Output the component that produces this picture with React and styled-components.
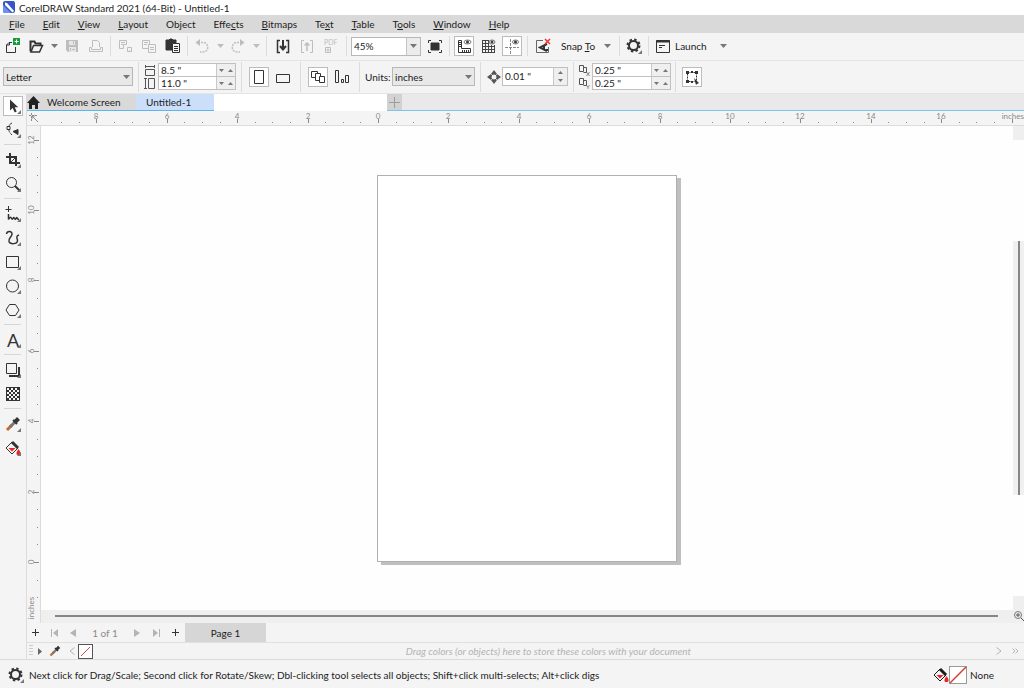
import React from 'react';
import styled, { createGlobalStyle, css } from 'styled-components';


const GlobalStyle = createGlobalStyle`
  * {
    box-sizing: border-box;
  }

  body {
    margin: 0;
    background: #f4f4f4;
    color: #1c1c1c;
    font-family: Lato, 'Open Sans', sans-serif;
    font-size: 10px;
    line-height: 14px;
  }

  button, input, select {
    font: inherit;
    color: inherit;
    margin: 0;
  }

  svg {
    display: block;
    flex: none;
    overflow: visible;
  }
`;

const Window = styled.div`
  display: flex;
  flex-direction: column;
  min-height: 100vh;
`;

const TitleBar = styled.header`
  display: flex;
  align-items: center;
  gap: 3px;
  height: 15px;
  padding-left: 2px;
  background: #fff;
`;

const Title = styled.h1`
  margin: 0;
  font-size: 10px;
  font-weight: 400;
  line-height: 14px;
  white-space: nowrap;
`;

const MenuBar = styled.nav`
  display: flex;
  align-items: center;
  height: 18px;
  background: #d9d9d9;
`;

const MenuItem = styled.button`
  border: 0;
  padding: 0 9px;
  background: none;
  line-height: 18px;
`;

const Bar = styled.div`
  display: flex;
  align-items: center;
  height: ${p => p.$height}px;
  padding: 0 0 1px ${p => p.$start || 0}px;
  border-bottom: 1px solid #e4e4e4;
  background: #f4f4f4;
`;

const Sep = styled.span`
  flex: none;
  width: 1px;
  height: ${p => p.$tall ? 30 : 20}px;
  margin: 0 ${p => p.$gap || 2}px;
  background: #dcdcdc;
`;

const IconButton = styled.button`
  display: flex;
  flex: none;
  align-items: center;
  justify-content: center;
  width: 20px;
  height: 20px;
  margin: 0 2px;
  padding: 0;
  border: 1px solid transparent;
  background: none;
  color: #333;

  ${p => p.$on && css`
    border-color: #bcbcbc;
    background: #fff;
  `}

  &:disabled {
    color: #bdbdbd;
  }
`;

const CaretButton = styled.button`
  display: flex;
  flex: none;
  align-items: center;
  justify-content: center;
  width: ${p => p.$wide ? 20 : 12}px;
  height: 20px;
  padding: 0;
  border: 0;
  background: none;
  color: #777;

  &:disabled {
    color: #bdbdbd;
  }
`;

const TextButton = styled.button`
  flex: none;
  width: ${p => p.$width}px;
  padding: 0;
  border: 0;
  background: none;
  text-align: left;
  white-space: nowrap;
`;

const SnapGroup = styled.div`
  display: flex;
  align-items: center;
  padding-left: 6px;
`;

const Combo = styled.div`
  display: flex;
  flex: none;
  width: 70px;
  height: 19px;
  margin: 0 2px 0 1px;
  border: 1px solid #b8b8b8;
  background: #fff;
`;

const ComboInput = styled.input`
  flex: 1;
  min-width: 0;
  padding: 0 2px;
  border: 0;
  background: #fff;
`;

const ComboArrow = styled.button`
  display: flex;
  align-items: center;
  justify-content: center;
  width: 14px;
  padding: 0;
  border: 0;
  border-left: 1px solid #c4c4c4;
  background: #ececec;
  color: #777;
`;

const SelectBox = styled.div`
  display: flex;
  align-items: center;
  position: relative;
  flex: none;
  width: ${p => p.$width}px;
  height: 19px;

  select {
    width: 100%;
    height: 100%;
    padding: 0 2px;
    border: 1px solid #b8b8b8;
    border-radius: 0;
    background: #e8e8e8;
    appearance: none;
  }

  svg {
    position: absolute;
    right: 3px;
    color: #777;
    pointer-events: none;
  }
`;

const UnitsLabel = styled.label`
  flex: none;
  width: 27px;
  white-space: nowrap;
`;

const Pair = styled.div`
  display: flex;
  flex-direction: column;
  flex: none;
`;

const PairRow = styled.div`
  display: flex;
  align-items: center;
  height: 13px;
`;

const PairLabel = styled.label`
  width: ${p => p.$width}px;
  color: #555;
`;

const Field = styled.div`
  display: flex;
  width: ${p => p.$width}px;
  height: ${p => p.$height}px;
  border: 1px solid #c0c0c0;
  background: #fff;

  input {
    flex: 1;
    min-width: 0;
    padding: 0 2px;
    border: 0;
    background: none;
    line-height: 11px;
  }
`;

const Spinner = styled.div`
  display: flex;
  flex-direction: ${p => p.$stacked ? 'column-reverse' : 'row'};
  width: ${p => p.$stacked ? 14 : 19}px;
  border-left: 1px solid #c8c8c8;
  background: #efefef;

  button {
    display: flex;
    flex: 1;
    align-items: center;
    justify-content: center;
    padding: 0;
    border: 0;
    background: none;
    color: #777;
  }
`;

const Main = styled.main`
  display: flex;
  flex: 1;
`;

const Toolbox = styled.aside`
  display: flex;
  flex-direction: column;
  flex: none;
  width: 27px;
  border-right: 1px solid #dcdcdc;
`;

const ToolSlot = styled.div`
  display: flex;
  align-items: center;
  justify-content: center;
  height: 24px;
`;

const ToolSep = styled.span`
  height: 1px;
  margin: 2px 5px 3px 4px;
  background: #d6d6d6;
`;

const Workspace = styled.section`
  display: flex;
  flex: 1;
  flex-direction: column;
  min-width: 0;
`;

const Tabs = styled.div`
  display: flex;
  height: 17px;
  background: #e9e9e9;
  border-bottom: 1px solid #7cc4ea;
`;

const TabStart = styled.div`
  display: flex;
  flex: none;
  width: 360px;
  margin-bottom: -1px;
  background: #fff;
`;

const Tab = styled.button`
  display: flex;
  align-items: center;
  gap: 7px;
  flex: none;
  width: ${p => p.$width}px;
  padding: 0 0 0 ${p => p.$pad}px;
  border: 0;
  border-bottom: 1px solid #5db5ea;
  background: ${p => p.$active ? '#cbdffb' : '#d9d9d9'};
  white-space: nowrap;
`;

const AddTab = styled.button`
  display: flex;
  align-items: center;
  justify-content: center;
  width: 15px;
  padding: 0;
  border: 0;
  background: #d2d2d2;
  color: #9c9c9c;
`;

const RulerRow = styled.div`
  display: flex;
  height: 15px;
  border-bottom: 1px solid #dcdcdc;
`;

const Corner = styled.div`
  display: flex;
  flex: none;
  align-items: center;
  justify-content: center;
  width: 14px;
  color: #8a8a8a;
`;

const Rule = styled.div`
  flex: 1;
  min-width: 0;
`;

const Stage = styled.div`
  display: flex;
  flex: 1;
`;

const SideRule = styled.div`
  flex: none;
  width: 14px;
  border-right: 1px solid #dcdcdc;
`;

const StageBody = styled.div`
  display: flex;
  flex: 1;
  flex-direction: column;
  min-width: 0;
`;

const CanvasRow = styled.div`
  display: flex;
  flex: 1;
  background: #fefefe;
`;

const Canvas = styled.div`
  position: relative;
  flex: 1;
  min-height: 484px;
`;

const Paper = styled.div`
  position: absolute;
  left: 336px;
  top: 49px;
  width: 300px;
  height: 387px;
  border: 1px solid #b0b0b0;
  background: #fff;
  box-shadow: 4px 3px 0 #bfbfbf;
`;

const VScroll = styled.div`
  display: flex;
  flex-direction: column;
  flex: none;
  width: 11px;
`;

const VEnd = styled.span`
  height: 14px;
  background: #efefef;
`;

const VThumb = styled.span`
  height: 254px;
  margin: 101px 0 auto;
  background: linear-gradient(90deg, #f0f0f0 5px, #868686 5px, #868686 7px, #f0f0f0 7px);
`;

const HScroll = styled.div`
  display: flex;
  align-items: center;
  height: 13px;
  padding: 0 0 1px 14px;
  background: #efefef;
`;

const HThumb = styled.span`
  flex: 1;
  height: 2px;
  margin-right: 16px;
  background: #868686;
`;

const PageBar = styled.div`
  display: flex;
  align-items: stretch;
  height: 19px;
`;

const NavButton = styled.button`
  display: flex;
  align-items: center;
  justify-content: center;
  width: ${p => p.$width || 20}px;
  padding: 0;
  border: 0;
  background: none;
  color: #333;

  &:disabled {
    color: #b4b4b4;
  }
`;

const PageCount = styled.span`
  width: 46px;
  color: #8c8c8c;
  line-height: 20px;
  text-align: center;
`;

const PageTab = styled.button`
  width: 81px;
  margin-left: 1px;
  padding: 0;
  border: 0;
  background: #d6d6d6;
  line-height: 20px;
`;

const Palette = styled.div`
  display: flex;
  align-items: center;
  height: 17px;
  border-top: 1px solid #e0e0e0;
`;

const Grip = styled.span`
  width: 4px;
  height: 12px;
  margin: 0 2px;
  background: repeating-linear-gradient(#ccc 0 1px, transparent 1px 3px);
`;

const NoColor = styled.button`
  display: flex;
  align-items: center;
  justify-content: center;
  width: ${p => p.$size}px;
  height: ${p => p.$size}px;
  padding: 0;
  border: 1px solid ${p => p.$line};
  background: #fff;
`;

const PaletteHint = styled.span`
  flex: 1;
  padding-left: 12px;
  color: #b3b3b3;
  font-style: italic;
  text-align: center;
  white-space: nowrap;
`;

const StatusBar = styled.footer`
  display: flex;
  align-items: center;
  height: 29px;
  padding: 1px 4px 0;
  border-top: 1px solid #dadada;
`;

const StatusText = styled.span`
  flex: 1;
  margin-left: 1px;
  white-space: nowrap;
`;

const NoneText = styled.span`
  width: 50px;
  margin-left: 3px;
`;

const Icon = ({ w = 16, h = 16, children }) => (
  <svg width={w} height={h} viewBox={`0 0 ${w} ${h}`} fill="none" stroke="currentColor" aria-hidden="true">
    {children}
  </svg>
);

const Caret = ({ up, small }) => (
  <svg width={small ? 5 : 7} height={small ? 3 : 4} viewBox="0 0 7 4" fill="currentColor" aria-hidden="true">
    <path d={up ? 'M0 4h7L3.5 0z' : 'M0 0h7L3.5 4z'} />
  </svg>
);

const Flyout = () => <path d="M16 12v4h-4z" fill="#777" stroke="none" />;

// 16x16 drawings, most lines sit on half pixels to stay crisp
const icons = {
  add: <><path d="M8 4.500H5L2.500 7v7.500h9V9M5.500 4.500V7H2.500" /><path d="M9 0h7v7H9z" fill="#169b3f" stroke="none" /><path d="M12.500 1.500v4M10.500 3.500h4" stroke="#fff" /></>,
  open: <><path d="M2.500 13.500V3.500h4l1 2h5V7" strokeWidth="2" /><path d="M5.500 7.500h9l-3 6.500H3z" fill="#f4f4f4" strokeWidth="1.500" /></>,
  save: <><path d="M2 2h12v12H4l-2-2z" fill="currentColor" stroke="none" /><path d="M5 3h6v4H5zM5 9h7v5H5z" fill="#e6e6e6" stroke="none" /><path d="M6.500 10v3M8 11.500h3M9.500 3v3" /></>,
  print: <><path d="M4.500 9V2.500h5l2 2V9M1.500 9.500h2v2h9v-2h2v4h-13z" /></>,
  cut: <><path d="M2.500 2.500h7v4h-3v4h-4zM4 4.500h4M4 6.500h2M10.500 9.500h4v4h-4z" /><path d="M12 13h3" strokeDasharray="1 1" /></>,
  copy: <><path d="M1.500 2.500h7v8h-7zM3 4.500h4M3 6.500h3" /><path d="M7.500 6.500h7v8h-7z" fill="#f4f4f4" /><path d="M9 9.500h4M9 11.500h4" /></>,
  paste: <><path d="M1 2h3l1-1h2l1 1h3v4H7v6H1z" fill="currentColor" /><path d="M7.500 5.500h7v9h-7z" fill="#f4f4f4" /><path d="M9 8.500h4M9 10.500h4M9 12.500h4" /></>,
  undo: <><path d="M4 4.500h5a4.500 4.500 0 0 1 0 9.500H6" strokeDasharray="2 1" strokeWidth="1.500" /><path d="M6 1v7L1.500 4.500z" fill="currentColor" stroke="none" /></>,
  redo: <><path d="M12 4.500H7a4.500 4.500 0 0 0 0 9.500h3" strokeDasharray="2 1" strokeWidth="1.500" /><path d="M10 1v7l4.500-3.500z" fill="currentColor" stroke="none" /></>,
  import: <><path d="M5 2.500H2.500v12H5M11 2.500h2.500v12H11" strokeWidth="1.500" /><path d="M8 2v9M5 8l3 3.500L11 8" strokeWidth="2" /></>,
  export: <><path d="M5 2.500H2.500v12H5M11 2.500h2.500v12H11" /><path d="M8 13V5M5.500 7.500L8 5l2.500 2.500" strokeWidth="1.500" /></>,
  pdf: <><text x="1" y="7" fontSize="7" fill="currentColor" stroke="none">PDF</text><path d="M2.500 9.500h5v5h-5zM5 10.500v3M3.500 12h3" /></>,
  full: <><path d="M4 5h8v7H4z" fill="currentColor" /><path d="M1.500 5V2.500H4M12 2.500h2.500V5M14.500 12v2.500H12M4 14.500H1.500V12" /></>,
  rulers: <><path d="M2.500 2.500h3v8h9v4h-12z" /><path d="M3 4.500h2M3 6.500h2M3 8.500h2M6.500 12v2M8.500 12v2M10.500 12v2M12.500 12v2" /><ellipse cx="11.500" cy="4" rx="3.500" ry="2" stroke="#777" /><circle cx="11.500" cy="4" r="1" fill="currentColor" /></>,
  grid: <><path d="M2.500 2v13M5.500 2v13M8.500 2v13M11.500 7v8M14.500 7v8M2 2.500h7M2 5.500h7M2 8.500h13M2 11.500h13M2 14.500h13" strokeWidth="1" stroke="#444" /><ellipse cx="12" cy="4" rx="3" ry="2" stroke="#777" /><circle cx="12" cy="4" r="1" fill="currentColor" /></>,
  guides: <><path d="M6.500 1v15M1 9.500h14" strokeDasharray="3 1" stroke="#888" /><ellipse cx="11.500" cy="4" rx="3" ry="2" stroke="#777" /><circle cx="11.500" cy="4" r="1" fill="currentColor" /></>,
  snapOff: <><path d="M8 2.500H1.500v12h12V9" stroke="#666" /><path d="M12 6L5 9.500l7 3.500M9 8v4M12 13v-2" strokeWidth="2" /><path d="M10 1l5 5M15 1l-5 5" stroke="#e33" strokeWidth="1.500" /></>,
  gear: <><circle cx="7.500" cy="7.500" r="4.500" strokeWidth="2" /><circle cx="7.500" cy="7.500" r="6" strokeWidth="2" strokeDasharray="2.400 2.310" /><Flyout /></>,
  launch: <><path d="M1.500 2.500h13v12h-13z" /><path d="M1 3.500h14" strokeWidth="2" /><path d="M4 7.500h6M4 9.500h3" /></>,
  portrait: <path d="M3.500 1.500h9v13h-9z" />,
  landscape: <path d="M1.500 5.500h13v8h-13z" />,
  allPages: <><path d="M1.500 2.500h6v6h-6z" /><path d="M5.500 4.500h5v7h-5z" fill="#fff" /><path d="M9.500 7.500h5v6h-5z" fill="#fff" /></>,
  curPage: <path d="M1.500 1.500h3v12h-3zM7.500 10.500h2v3h-2zM11.500 6.500h3v7h-3z" />,
  nudge: <><circle cx="8" cy="8" r="3" /><path d="M8 1l3 4H5zM8 15l3-4H5zM1 8l4-3v6zM15 8l-4-3v6z" fill="currentColor" stroke="none" /></>,
  bounds: <><path d="M3.500 3.500h9v9h-9z" strokeDasharray="2 1" /><path d="M2 2h3v3H2zM11 2h3v3h-3zM2 11h3v3H2zM7 2h2v2H7zM7 12h2v2H7z" fill="currentColor" stroke="none" /><path d="M10 9l5 5-2 1-1 1z" fill="currentColor" stroke="none" /></>,
  pick: <><path d="M5 1.500v11l2.700-2.500 2 4.500 2-1-2-4.200h3.500z" fill="currentColor" stroke="none" /><Flyout /></>,
  shape: <><path d="M7 1C2 3 3 10 7 13" strokeDasharray="5 1" /><path d="M2 4.500h3v3H2z" fill="#f4f4f4" /><path d="M8 9.500l5-2v5z" fill="currentColor" /><Flyout /></>,
  crop: <><path d="M5 1v10h10M1 5h10v9" strokeWidth="2" /><path d="M6 10l5-5" /><Flyout /></>,
  zoom: <><circle cx="6.500" cy="6.500" r="5" /><path d="M10 10l5 5" strokeWidth="2" /><Flyout /></>,
  freehand: <><path d="M3.500 0v6M.5 3.500h6" /><path d="M3.500 8v5.500c3-6 3 2 4.500-1s2 3 3 0 1 1 3 1" strokeWidth="1.500" /><Flyout /></>,
  curve: <><path d="M1.500 4C2 1 7 0.500 7 4 7 7 3 8 4 11.500c1 3 8.500 3 8.500-1C12.500 8 10 6.500 14 5" strokeWidth="1.500" /><Flyout /></>,
  rect: <><path d="M1.500 2.500h12v11h-12z" /><Flyout /></>,
  ellipse: <><circle cx="7.500" cy="8" r="6" /><Flyout /></>,
  polygon: <><path d="M4.500 2.500h6l3.500 5.500-3.500 5.500h-6L1 8z" /><Flyout /></>,
  text: <><text x="8" y="15" fontSize="18" textAnchor="middle" fill="currentColor" stroke="none">A</text><Flyout /></>,
  shadow: <><path d="M4 14h10V5" strokeWidth="2" /><path d="M1.500 1.500h10v10h-10z" fill="#f4f4f4" /><Flyout /></>,
  checker: (
    <g stroke="none">
      <path d="M1 1h14v14H1z" fill="currentColor" />
      {[0, 1, 2, 3, 4, 5].map(r => [0, 1, 2, 3, 4, 5].map(c => (
        (r + c) % 2 === 0 && <path key={`${r}-${c}`} d={`M${2 + c * 2} ${2 + r * 2}h2v2h-2z`} fill="#f4f4f4" />
      )))}
    </g>
  ),
  dropper: <><path d="M2 14l5-5" stroke="#c36a2d" strokeWidth="3" /><path d="M5 11l6-6" stroke="#777" strokeWidth="3" /><path d="M8 4l4 4" strokeWidth="2" /><path d="M10 6l3.500-3.500" strokeWidth="4" /></>,
  fill: <><path d="M7 2l6 6-6 6-6-6z" /><path d="M7 2l6 6" strokeWidth="3" /><path d="M3.500 8h7L7 11.500z" fill="#e22" stroke="none" /><path d="M13.500 9c3 4 2.500 6 0 6s-3-2 0-6z" fill="#e22" stroke="none" /></>,
};

icons.dropperTool = <>{icons.dropper}<Flyout /></>;
icons.fillTool = <>{icons.fill}<Flyout /></>;

const Tool = ({ name, label, on, disabled }) => (
  <IconButton type="button" aria-label={label} title={label} $on={on} disabled={disabled}>
    <Icon>{icons[name]}</Icon>
  </IconButton>
);

const Steps = ({ stacked, label }) => (
  <Spinner $stacked={stacked}>
    <button type="button" aria-label={`Decrease ${label}`}><Caret small /></button>
    <button type="button" aria-label={`Increase ${label}`}><Caret small up /></button>
  </Spinner>
);

// [label, index of the access key]
const menus = [
  ['File', 0], ['Edit', 0], ['View', 0], ['Layout', 0], ['Object', 2], ['Effects', 4],
  ['Bitmaps', 0], ['Text', 2], ['Table', 0], ['Tools', 1], ['Window', 0], ['Help', 0],
];

const tools = [
  ['pick', 'Pick'], ['shape', 'Shape'], null,
  ['crop', 'Crop'], ['zoom', 'Zoom'], null,
  ['freehand', 'Freehand'], ['curve', 'Artistic media'], ['rect', 'Rectangle'], ['ellipse', 'Ellipse'], ['polygon', 'Polygon'], null,
  ['text', 'Text'], null,
  ['shadow', 'Drop shadow'], ['checker', 'Transparency'], null,
  ['dropperTool', 'Color eyedropper'], ['fillTool', 'Interactive fill'],
];

const UNIT = 35.2;
const steps = (from, to) => Array.from({ length: (to - from) * 2 + 1 }, (_, i) => from + i / 2);

const HorizontalRuler = () => {
  // 378px is where the page starts, the last inch before the edge gives room to the unit
  const last = Math.floor((window.innerWidth - 378) / UNIT);

  return (
    <svg width="100%" height="14" fill="#8a8a8a" fontSize="8" textAnchor="middle" role="img" aria-label="Horizontal ruler">
      {steps(-9, last).map(n => {
        const x = Math.round(337 + n * UNIT);
        const major = n % 2 === 0;
        return (
          <g key={n}>
            <path d={major ? `M${x} 8h1v4h-1z` : `M${x} 11h1v1h-1z`} />
            {major && n < last && <text x={x} y="8">{Math.abs(n)}</text>}
          </g>
        );
      })}
      <text x="100%" y="8" textAnchor="end">inches</text>
    </svg>
  );
};

const VerticalRuler = () => (
  <svg width="13" height="497" fill="#8a8a8a" fontSize="8" textAnchor="middle" role="img" aria-label="Vertical ruler">
    {steps(-1, 12).map(n => {
      const y = Math.round(436 - n * UNIT);
      const major = n % 2 === 0;
      return (
        <g key={n}>
          <path d={major ? `M7 ${y}h5v1h-5z` : `M10 ${y}h1v1h-1z`} />
          {major && <text transform={`translate(7 ${y}) rotate(-90)`}>{n}</text>}
        </g>
      );
    })}
    <text transform="translate(7 482) rotate(-90)">inches</text>
  </svg>
);

const StandardBar = () => (
  <Bar $height={28}>
    <Tool name="add" label="New" />
    <Tool name="open" label="Open" />
    <CaretButton type="button" aria-label="Recent files"><Caret /></CaretButton>
    <Tool name="save" label="Save" disabled />
    <Tool name="print" label="Print" disabled />
    <Sep />
    <Tool name="cut" label="Cut" disabled />
    <Tool name="copy" label="Copy" disabled />
    <Tool name="paste" label="Paste" />
    <Sep />
    <Tool name="undo" label="Undo" disabled />
    <CaretButton type="button" aria-label="Undo list" disabled><Caret /></CaretButton>
    <Tool name="redo" label="Redo" disabled />
    <CaretButton type="button" aria-label="Redo list" disabled><Caret /></CaretButton>
    <Sep $gap={4} />
    <Tool name="import" label="Import" />
    <Tool name="export" label="Export" disabled />
    <Tool name="pdf" label="Publish to PDF" disabled />
    <Sep $gap={3} />
    <Combo>
      <ComboInput aria-label="Zoom level" defaultValue="45%" />
      <ComboArrow type="button" aria-label="Zoom levels"><Caret /></ComboArrow>
    </Combo>
    <Tool name="full" label="Full-screen preview" />
    <Sep />
    <Tool name="rulers" label="Show rulers" on />
    <Tool name="grid" label="Show grid" />
    <Tool name="guides" label="Show guidelines" on />
    <Sep $gap={3} />
    <Tool name="snapOff" label="Snap off" />
    <SnapGroup>
      <TextButton type="button" $width={36}>Snap <u>T</u>o</TextButton>
      <CaretButton type="button" aria-label="Snap options" $wide><Caret /></CaretButton>
    </SnapGroup>
    <Sep />
    <Tool name="gear" label="Options" />
    <Sep />
    <Tool name="launch" label="Application launcher" />
    <TextButton type="button" $width={38}>Launch</TextButton>
    <CaretButton type="button" aria-label="Launch list" $wide><Caret /></CaretButton>
  </Bar>
);

const PropertyBar = () => (
  <Bar $height={33} $start={3}>
    <SelectBox $width={130}>
      <select aria-label="Page size" defaultValue="Letter"><option>Letter</option></select>
      <Caret />
    </SelectBox>
    <Sep $tall $gap={5} />
    <Pair>
      <PairRow>
        <PairLabel htmlFor="page-width" aria-label="Page width" $width={14}>
          <Icon w={12} h={13}><path d="M1.500 5.500h9v6h-9zM1 2.500h10M1.500 1v3M10.500 1v3" /></Icon>
        </PairLabel>
        <Field $width={78} $height={14}><input id="page-width" defaultValue={'8.5 "'} /><Steps label="width" /></Field>
      </PairRow>
      <PairRow>
        <PairLabel htmlFor="page-height" aria-label="Page height" $width={14}>
          <Icon w={12} h={13}><path d="M4.500 1.500h6v10h-6zM1.500 1v11M0 1.500h3M0 11.500h3" /></Icon>
        </PairLabel>
        <Field $width={78} $height={14}><input id="page-height" defaultValue={'11.0 "'} /><Steps label="height" /></Field>
      </PairRow>
    </Pair>
    <Sep $tall $gap={5} />
    <Tool name="portrait" label="Portrait" on />
    <Tool name="landscape" label="Landscape" />
    <Sep $tall $gap={5} />
    <Tool name="allPages" label="All pages" on />
    <Tool name="curPage" label="Current page" />
    <Sep $tall $gap={5} />
    <UnitsLabel htmlFor="units">Units:</UnitsLabel>
    <SelectBox $width={83}>
      <select id="units" defaultValue="inches"><option>inches</option></select>
      <Caret />
    </SelectBox>
    <Sep $tall $gap={5} />
    <PairLabel htmlFor="nudge" aria-label="Nudge distance" $width={16}><Icon>{icons.nudge}</Icon></PairLabel>
    <Field $width={66} $height={19}><input id="nudge" defaultValue={'0.01 "'} /><Steps stacked label="nudge" /></Field>
    <Sep $tall $gap={5} />
    <Pair>
      {['x', 'y'].map(axis => (
        <PairRow key={axis}>
          <PairLabel htmlFor={`dup-${axis}`} aria-label={`Duplicate distance ${axis}`} $width={13}>
            <Icon w={12} h={12}>
              <path d="M.5 1.500h4v6h-4zM4.500 3.500h3v5h-3" />
              <text x="7" y="12" fontSize="6" fill="currentColor" stroke="none">{axis.toUpperCase()}</text>
            </Icon>
          </PairLabel>
          <Field $width={79} $height={14}><input id={`dup-${axis}`} defaultValue={'0.25 "'} /><Steps label={axis} /></Field>
        </PairRow>
      ))}
    </Pair>
    <Sep $tall $gap={4} />
    <Tool name="bounds" label="Treat as filled" on />
  </Bar>
);

const PageNavigator = () => (
  <PageBar>
    <NavButton type="button" aria-label="Add page before" $width={17}><Icon w={9} h={9}><path d="M4.500 1v7M1 4.500h7" /></Icon></NavButton>
    <NavButton type="button" aria-label="First page" disabled><Icon w={9} h={8}><path d="M1.500 0v8" /><path d="M8 0v8L3 4z" fill="currentColor" stroke="none" /></Icon></NavButton>
    <NavButton type="button" aria-label="Previous page" disabled $width={18}><Icon w={6} h={8}><path d="M6 0v8L0 4z" fill="currentColor" stroke="none" /></Icon></NavButton>
    <PageCount>1 of 1</PageCount>
    <NavButton type="button" aria-label="Next page" disabled $width={18}><Icon w={6} h={8}><path d="M0 0v8l6-4z" fill="currentColor" stroke="none" /></Icon></NavButton>
    <NavButton type="button" aria-label="Last page" disabled><Icon w={9} h={8}><path d="M7.500 0v8" /><path d="M1 0v8l5-4z" fill="currentColor" stroke="none" /></Icon></NavButton>
    <NavButton type="button" aria-label="Add page after" $width={18}><Icon w={9} h={9}><path d="M4.500 1v7M1 4.500h7" /></Icon></NavButton>
    <PageTab type="button">Page 1</PageTab>
  </PageBar>
);

const DocumentPalette = () => (
  <Palette>
    <Grip />
    <NavButton type="button" aria-label="Palette menu" $width={10}><Icon w={4} h={7}><path d="M0 0v7l4-3.500z" fill="#666" stroke="none" /></Icon></NavButton>
    <NavButton type="button" aria-label="Sample color">
      <svg width="12" height="12" viewBox="0 0 16 16" fill="none" stroke="currentColor" aria-hidden="true">{icons.dropper}</svg>
    </NavButton>
    <NavButton type="button" aria-label="Scroll left" disabled $width={13}><Icon w={6} h={8}><path d="M5.500.500L1 4l4.500 3.500" /></Icon></NavButton>
    <NoColor type="button" aria-label="No color" $size={15} $line="#555">
      <Icon w={13} h={13}><path d="M2 11l9-9" stroke="#e0433c" /></Icon>
    </NoColor>
    <PaletteHint>Drag colors (or objects) here to store these colors with your document</PaletteHint>
    <NavButton type="button" aria-label="Scroll right" disabled $width={14}><Icon w={6} h={8}><path d="M.5.500L5 4 .5 7.500" /></Icon></NavButton>
    <NavButton type="button" aria-label="More colors" disabled $width={18}><Icon w={7} h={6}><path d="M.5.500L3 3 .5 5.500M3.500.500L6 3 3.500 5.500" /></Icon></NavButton>
  </Palette>
);

/**
 * Drawing window
 * @return {*}
 * @constructor
 */
const App = () => (
  <Window>
    <GlobalStyle />
    <TitleBar>
      <svg width="14" height="14" viewBox="0 0 14 14" aria-hidden="true">
        <rect x="1" y="0" width="12" height="12" rx="2" fill="#3557c9" />
        <path d="M1 4v6a2 2 0 0 0 2 2h6z" fill="#6e92ec" />
        <path d="M3 1.500l2 .5 7 8-1.500 1.500L3 4z" fill="#fff" />
      </svg>
      <Title>CorelDRAW Standard 2021 (64-Bit) - Untitled-1</Title>
    </TitleBar>

    <MenuBar>
      {menus.map(([label, key]) => (
        <MenuItem key={label} type="button">
          {label.slice(0, key)}<u>{label[key]}</u>{label.slice(key + 1)}
        </MenuItem>
      ))}
    </MenuBar>

    <StandardBar />
    <PropertyBar />

    <Main>
      <Toolbox>
        {tools.map((tool, i) => (
          tool ? <ToolSlot key={tool[0]}><Tool name={tool[0]} label={tool[1]} on={i === 0} /></ToolSlot> : <ToolSep key={i} />
        ))}
      </Toolbox>

      <Workspace>
        <Tabs>
          <TabStart>
            <Tab type="button" $width={109} $pad={0}>
              <svg width="13" height="13" viewBox="0 0 13 13" fill="#222" aria-hidden="true"><path d="M6.500 0L0 7h2v6h3V9h3v4h3V7h2z" /></svg>
              Welcome Screen
            </Tab>
            <Tab type="button" $width={78} $pad={10} $active>Untitled-1</Tab>
          </TabStart>
          <AddTab type="button" aria-label="New document"><Icon w={11} h={11}><path d="M5.500 0v11M0 5.500h11" /></Icon></AddTab>
        </Tabs>

        <RulerRow>
          <Corner><Icon w={10} h={10}><path d="M2.500 0v9M0 2.500h9" strokeDasharray="2 1" /><path d="M3 3l6 6M3 6V3h3" /></Icon></Corner>
          <Rule><HorizontalRuler /></Rule>
        </RulerRow>

        <Stage>
          <SideRule><VerticalRuler /></SideRule>
          <StageBody>
            <CanvasRow>
              <Canvas><Paper /></Canvas>
              <VScroll><VEnd /><VThumb /><VEnd /></VScroll>
            </CanvasRow>
            <HScroll>
              <HThumb />
              <Icon w={10} h={10}><circle cx="4" cy="4" r="3.500" stroke="#777" /><path d="M2 4h4M4 2v4M7 7l3 3" stroke="#555" /></Icon>
            </HScroll>
          </StageBody>
        </Stage>

        <PageNavigator />
        <DocumentPalette />
      </Workspace>
    </Main>

    <StatusBar>
      <Tool name="gear" label="Status bar options" />
      <StatusText>Next click for Drag/Scale; Second click for Rotate/Skew; Dbl-clicking tool selects all objects; Shift+click multi-selects; Alt+click digs</StatusText>
      <Icon>{icons.fill}</Icon>
      <NoColor type="button" aria-label="Fill color" $size={18} $line="#999">
        <Icon><path d="M0 16L16 0" stroke="#d8392f" strokeWidth="1.500" /></Icon>
      </NoColor>
      <NoneText>None</NoneText>
    </StatusBar>
  </Window>
);

export default App;
